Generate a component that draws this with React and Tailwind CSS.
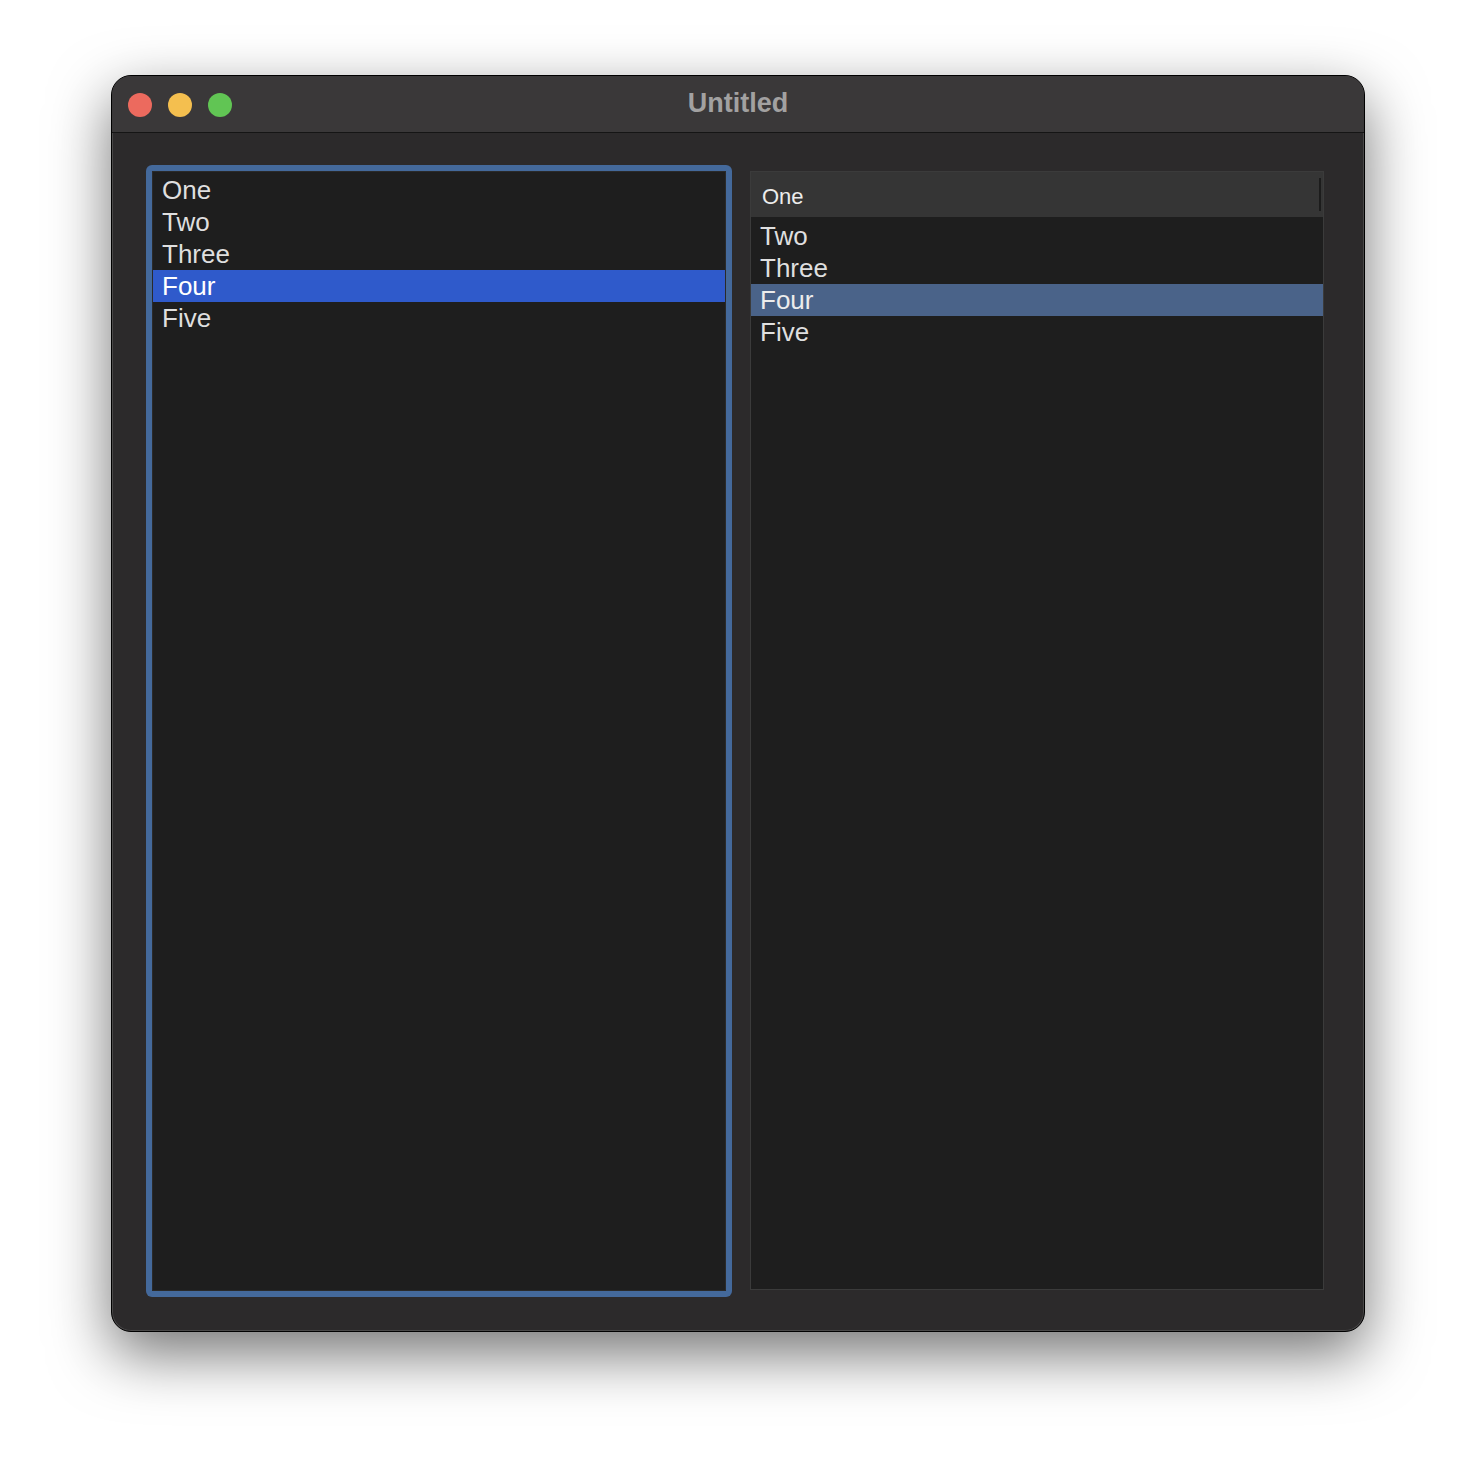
import React from 'react';

const items = ['One', 'Two', 'Three', 'Four', 'Five'];
const font = { fontFamily: '"Liberation Sans", Arial, sans-serif' };

const Row = ({ label, selected, tone }) => (
  <div
    className={`h-[32px] leading-[32px] text-[26px] pl-[9px] ${
      selected ? (tone === 'blue' ? 'bg-[#2f5acb] text-white' : 'bg-[#4a6389] text-[#ececec]') : 'text-[#dfdfdf]'
    }`}
  >
    {label}
  </div>
);

export default function App() {
  return (
    <div className="w-[1476px] h-[1480px] bg-white pt-[75px] pl-[111px]" style={font}>
      <div className="w-[1254px] h-[1257px] rounded-[20px] border border-black bg-[#2c2a2b] shadow-[0_22px_60px_rgba(0,0,0,0.55),inset_0_0_0_1px_rgba(255,255,255,0.14)] overflow-hidden flex flex-col">
        {/* title bar */}
        <div className="h-[57px] shrink-0 bg-[#3a3839] border-b border-[#151515] flex items-center relative">
          <div className="flex gap-[16px] pl-[16px] pt-[1px]">
            <span className="w-[24px] h-[24px] rounded-full bg-[#ec6a5e]" />
            <span className="w-[24px] h-[24px] rounded-full bg-[#f4bf4f]" />
            <span className="w-[24px] h-[24px] rounded-full bg-[#61c554]" />
          </div>
          <div className="absolute left-0 right-0 top-0 h-[55px] flex items-center justify-center pointer-events-none">
            <span className="text-[27px] font-bold text-[#a2a1a1]">Untitled</span>
          </div>
        </div>

        {/* content */}
        <div className="flex gap-[18px] pl-[34px] pt-[32px]">
          {/* left list with focus ring */}
          <div className="w-[586px] h-[1132px] rounded-[6px] bg-[#44699b] p-[6px]">
            <div className="w-full h-full bg-[#1e1e1e] border border-[#2a2a2a] pt-[2px]">
              {items.map((it) => (
                <Row key={it} label={it} selected={it === 'Four'} tone="blue" />
              ))}
            </div>
          </div>

          {/* right table */}
          <div className="mt-[6px] w-[574px] h-[1119px] border border-[#3b3b3b] bg-[#1e1e1e]">
            <div className="h-[45px] bg-[#353535] flex items-center justify-between pl-[11px] pr-[2px]">
              <span className="text-[22px] text-[#ececec] pt-[4px]">One</span>
              <span className="w-[2px] h-[33px] bg-[#1c1c1c]" />
            </div>
            <div className="pt-[3px]">
              {items.slice(1).map((it) => (
                <Row key={it} label={it} selected={it === 'Four'} tone="gray" />
              ))}
            </div>
          </div>
        </div>
      </div>
    </div>
  );
}
